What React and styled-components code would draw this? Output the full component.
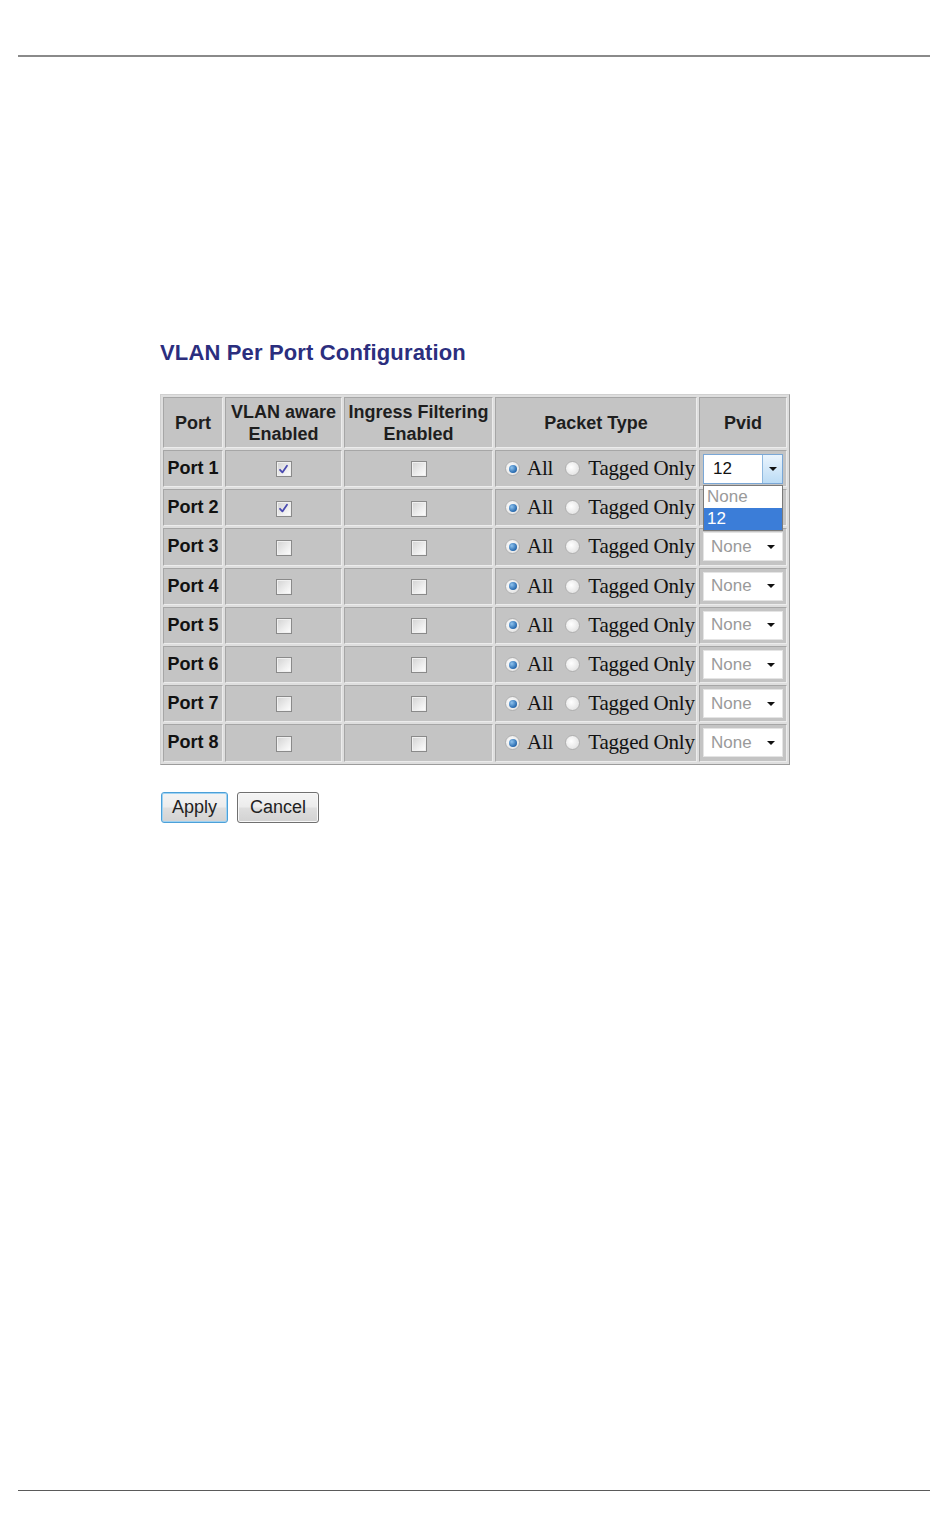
import React from "react";
import styled, { createGlobalStyle, css } from "styled-components";

const GlobalStyle = createGlobalStyle`
  html, body {
    margin: 0;
    padding: 0;
    background: #ffffff;
  }
`;

const Page = styled.div`
  height: 1525px;
  display: flex;
  flex-direction: column;
  padding-top: 55px;
  box-sizing: border-box;
  font-family: "Liberation Sans", Arial, sans-serif;
`;

const Rule = styled.hr`
  margin: 0 20px 0 18px;
  border: none;
  height: ${(p) => p.$thick}px;
  background: ${(p) => p.$color};
`;

const FooterRule = styled(Rule)`
  margin-top: auto;
  margin-bottom: 34px;
`;

const Content = styled.div`
  padding: 283px 0 0 160px;
`;

const Title = styled.h2`
  margin: 0 0 29px;
  font-size: 22px;
  line-height: 25px;
  font-weight: bold;
  color: #2b2e7e;
  letter-spacing: 0.15px;
`;

const Table = styled.table`
  border-collapse: separate;
  border-spacing: 2px 2.85px;
  background: #dedede;
  border: 1px solid;
  border-color: #d0d0d0 #9c9c9c #9c9c9c #d0d0d0;
  padding: 0;
  table-layout: fixed;
`;

const cellBase = css`
  box-sizing: border-box;
  background: #c4c4c4;
  border: 1px solid;
  border-color: #a6a6a6 #ececec #ececec #a6a6a6;
  padding: 0;
  color: #111;
`;

const HeadCell = styled.th`
  ${cellBase};
  width: ${(p) => p.$w}px;
  height: 51px;
  font-size: 18px;
  line-height: 22px;
  font-weight: bold;
  text-align: center;
  color: #1e1e1e;
`;

const PortCell = styled.td`
  ${cellBase};
  height: 37.2px;
  font-size: 18px;
  font-weight: bold;
  text-align: center;
  white-space: nowrap;
`;

const Cell = styled.td`
  ${cellBase};
  height: 37.2px;
  text-align: ${(p) => (p.$left ? "left" : "center")};
  padding: ${(p) => p.$pad || "0"};
  position: relative;
`;

const Check = styled.span`
  display: inline-flex;
  align-items: center;
  justify-content: center;
  width: 16px;
  height: 16px;
  box-sizing: border-box;
  vertical-align: middle;
  border: 1px solid #8a8a8a;
  background: linear-gradient(135deg, #d2d2d2 0%, #eeeeee 60%, #ffffff 100%);
  box-shadow: inset 0 0 0 1px #f0f0f0;
`;

const RadioGroup = styled.div`
  display: flex;
  align-items: center;
  font-family: "Liberation Serif", "Times New Roman", serif;
  font-size: 21px;
  color: #111;
  padding-left: 9px;
  letter-spacing: -0.2px;
`;

const Radio = styled.span`
  width: 15px;
  height: 15px;
  border-radius: 50%;
  box-sizing: border-box;
  border: 1px solid #b0b0b0;
  background: radial-gradient(circle at 40% 40%, #ffffff 0%, #e6e6e6 70%, #d0d0d0 100%);
  margin-right: ${(p) => p.$gap}px;
  display: inline-flex;
  align-items: center;
  justify-content: center;

  ${(p) =>
    p.$on &&
    css`
      &::after {
        content: "";
        width: 8px;
        height: 8px;
        border-radius: 50%;
        background: radial-gradient(circle at 35% 35%, #8fc3ee 0%, #2d6fb3 65%, #1d4f8a 100%);
      }
    `}
`;

const RadioLabel = styled.span`
  margin-right: ${(p) => p.$gap || 0}px;
`;

const Select = styled.div`
  display: flex;
  align-items: center;
  width: 80px;
  height: ${(p) => (p.$open ? 30 : 29)}px;
  box-sizing: border-box;
  background: #fff;
  border: 1px solid ${(p) => (p.$open ? "#7aa7d6" : "#e4e4e4")};
  font-size: 17px;
  text-align: left;
  color: ${(p) => (p.$value ? "#111" : "#9a9a9a")};
  padding-left: ${(p) => (p.$open ? 9 : 7)}px;
  visibility: ${(p) => (p.$covered ? "hidden" : "visible")};
`;

const SelectText = styled.span`
  flex: 1;
`;

const ArrowBox = styled.span`
  width: ${(p) => (p.$open ? 20 : 22)}px;
  align-self: stretch;
  display: flex;
  align-items: center;
  justify-content: center;
  box-sizing: border-box;
  ${(p) =>
    p.$open &&
    css`
      border-left: 1px solid #8fb8de;
      background: linear-gradient(#eaf4fd, #bcdcf5);
    `}
`;

const Arrow = styled.span`
  width: 0;
  height: 0;
  border-left: 4px solid transparent;
  border-right: 4px solid transparent;
  border-top: 4px solid #111;
`;

const DropList = styled.ul`
  position: absolute;
  top: 34px;
  left: 3px;
  width: 80px;
  margin: 0;
  padding: 0;
  list-style: none;
  box-sizing: border-box;
  border: 1px solid #7a7a7a;
  background: #fff;
  z-index: 2;
  text-align: left;
`;

const DropItem = styled.li`
  height: 22px;
  line-height: 22px;
  padding-left: 3px;
  font-size: 17px;
  color: ${(p) => (p.$active ? "#fff" : "#9a9a9a")};
  background: ${(p) => (p.$active ? "#3b7dd8" : "#fff")};
`;

const Buttons = styled.div`
  display: flex;
  gap: 9px;
  margin: 27px 0 0 1px;
`;

const Button = styled.button`
  height: 31px;
  padding: 0 ${(p) => (p.$focus ? 10 : 12)}px;
  font-family: "Liberation Sans", Arial, sans-serif;
  font-size: 18px;
  color: #222;
  border-radius: 3px;
  border: 1px solid ${(p) => (p.$focus ? "#4ca0d8" : "#707070")};
  box-shadow: ${(p) => (p.$focus ? "inset 0 0 0 1px #9fd2f2" : "inset 0 0 0 1px #f8f8f8")};
  background: linear-gradient(#f4f4f4 0%, #ececec 48%, #dedede 52%, #d2d2d2 100%);
`;

const CheckMark = () => (
  <svg width="11" height="11" viewBox="0 0 11 11">
    <path d="M2 5.8 L4.4 8.4 L9 1.8" fill="none" stroke="#4a4ab0" strokeWidth="1.8" strokeLinecap="round" strokeLinejoin="round" />
  </svg>
);

// Port 1's pvid list is dropped open and lies over port 2's select
const ports = [
  { aware: true, pvid: "12", open: true },
  { aware: true, pvid: "None", covered: true },
  { aware: false, pvid: "None" },
  { aware: false, pvid: "None" },
  { aware: false, pvid: "None" },
  { aware: false, pvid: "None" },
  { aware: false, pvid: "None" },
  { aware: false, pvid: "None" },
];

const PvidSelect = ({ value, open, covered }) => (
  <>
    <Select $open={open} $covered={covered} $value={value !== "None"}>
      <SelectText>{value}</SelectText>
      <ArrowBox $open={open}>
        <Arrow />
      </ArrowBox>
    </Select>
    {open && (
      <DropList>
        <DropItem>None</DropItem>
        <DropItem $active>12</DropItem>
      </DropList>
    )}
  </>
);

export default function App() {
  return (
    <>
      <GlobalStyle />
      <Page>
        <Rule $thick={2} $color="#8a8a8a" />
        <Content>
          <Title>VLAN Per Port Configuration</Title>
          <Table>
            <thead>
              <tr>
                <HeadCell $w={60}>Port</HeadCell>
                <HeadCell $w={117}>
                  VLAN aware
                  <br />
                  Enabled
                </HeadCell>
                <HeadCell $w={149}>
                  Ingress Filtering
                  <br />
                  Enabled
                </HeadCell>
                <HeadCell $w={202}>Packet Type</HeadCell>
                <HeadCell $w={87}>Pvid</HeadCell>
              </tr>
            </thead>
            <tbody>
              {ports.map((p, i) => (
                <tr key={i}>
                  <PortCell>Port {i + 1}</PortCell>
                  <Cell>
                    <Check>{p.aware && <CheckMark />}</Check>
                  </Cell>
                  <Cell>
                    <Check />
                  </Cell>
                  <Cell $left>
                    <RadioGroup>
                      <Radio $on $gap={7} />
                      <RadioLabel $gap={12}>All</RadioLabel>
                      <Radio $gap={8} />
                      <RadioLabel>Tagged Only</RadioLabel>
                    </RadioGroup>
                  </Cell>
                  <Cell $pad="0 3px">
                    <PvidSelect value={p.pvid} open={p.open} covered={p.covered} />
                  </Cell>
                </tr>
              ))}
            </tbody>
          </Table>
          <Buttons>
            <Button $focus>Apply</Button>
            <Button>Cancel</Button>
          </Buttons>
        </Content>
        <FooterRule $thick={1.5} $color="#5a5a5a" />
      </Page>
    </>
  );
}
